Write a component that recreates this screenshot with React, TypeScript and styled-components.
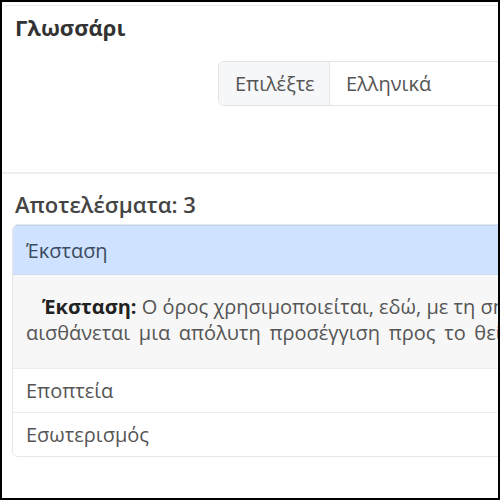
import React from 'react'
import styled, { createGlobalStyle } from 'styled-components'

const GlobalStyle = createGlobalStyle`
  html, body {
    margin: 0;
    padding: 0;
    background: #000;
  }
  * {
    box-sizing: border-box;
  }
`

const Frame = styled.div`
  width: 500px;
  height: 500px;
  border: 2px solid #000;
  background: #fff;
  overflow: hidden;
  font-family: 'Open Sans', 'Noto Sans', sans-serif;
  color: #555;
`

const Card = styled.div`
  width: 820px;
  margin-top: 3px;
  border-top: 1px solid #ececec;
  border-radius: 6px 6px 0 0;
`

const Header = styled.section`
  padding: 8px 13px 0;
  height: 168px;
  border-bottom: 2px solid #eeeeee;
`

const Title = styled.h1`
  margin: 0;
  font-size: 22px;
  line-height: 26px;
  font-weight: 700;
  color: #333;
`

const InputGroup = styled.div`
  display: flex;
  margin: 21px 0 0 203px;
  height: 45px;
  border: 1px solid #e3e3e3;
  border-radius: 6px;
  overflow: hidden;
`

const Addon = styled.span`
  display: flex;
  align-items: center;
  padding: 0 16px;
  width: 111px;
  background: #f6f7f8;
  border-right: 1px solid #e6e6e6;
  font-size: 20px;
  color: #555;
`

const SelectBox = styled.div`
  flex: 1;
  display: flex;
  align-items: center;
  padding: 0 16px;
  font-size: 20px;
  color: #555;
`

const Results = styled.section`
  padding: 16px 13px 0 10px;
`

const Count = styled.h2`
  margin: 0 0 6px 3px;
  font-size: 22px;
  line-height: 28px;
  font-weight: 600;
  color: #444;
`

const List = styled.div`
  border: 1px solid #e6e6e6;
  border-radius: 6px;
  overflow: hidden;
`

const Item = styled.div<{ $active?: boolean }>`
  display: flex;
  align-items: center;
  height: ${p => (p.$active ? '49px' : '44px')};
  padding: 0 13px;
  font-size: 20px;
  background: ${p => (p.$active ? '#cfe2ff' : '#fff')};
  color: ${p => (p.$active ? '#3a4b60' : '#555')};
  border-top: 1px solid ${p => (p.$active ? '#b9d2f5' : '#ededed')};
  &:first-child {
    border-top-color: #b9d2f5;
  }
`

const Detail = styled.div`
  background: #f7f7f7;
  padding: 19px 13px 0;
  border-top: 1px solid #c9dcf7;
  font-size: 20px;
  line-height: 26px;
  color: #555;
  height: 94px;
`

const Line = styled.span<{ $indent?: number; $spacing?: number }>`
  display: block;
  white-space: nowrap;
  padding-left: ${p => p.$indent ?? 0}px;
  word-spacing: ${p => p.$spacing ?? 0}px;
  strong {
    color: #222;
    font-weight: 700;
  }
`

const terms = ['Εποπτεία', 'Εσωτερισμός']

export default function App() {
  return (
    <>
      <GlobalStyle />
      <Frame>
        <Card>
          <Header>
            <Title>Γλωσσάρι</Title>
            <InputGroup>
              <Addon>Επιλέξτε</Addon>
              <SelectBox>Ελληνικά</SelectBox>
            </InputGroup>
          </Header>
          <Results>
            <Count>Αποτελέσματα: 3</Count>
            <List>
              <Item $active>Έκσταση</Item>
              <Detail>
                <Line $indent={16}>
                  <strong>Έκσταση:</strong> Ο όρος χρησιμοποιείται, εδώ, με τη σημασία της κατάστασης κατά την οποία ο άνθρωπος
                </Line>
                <Line $spacing={3.5}>αισθάνεται μια απόλυτη προσέγγιση προς το θείο.</Line>
              </Detail>
              {terms.map(t => (
                <Item key={t}>{t}</Item>
              ))}
            </List>
          </Results>
        </Card>
      </Frame>
    </>
  )
}
